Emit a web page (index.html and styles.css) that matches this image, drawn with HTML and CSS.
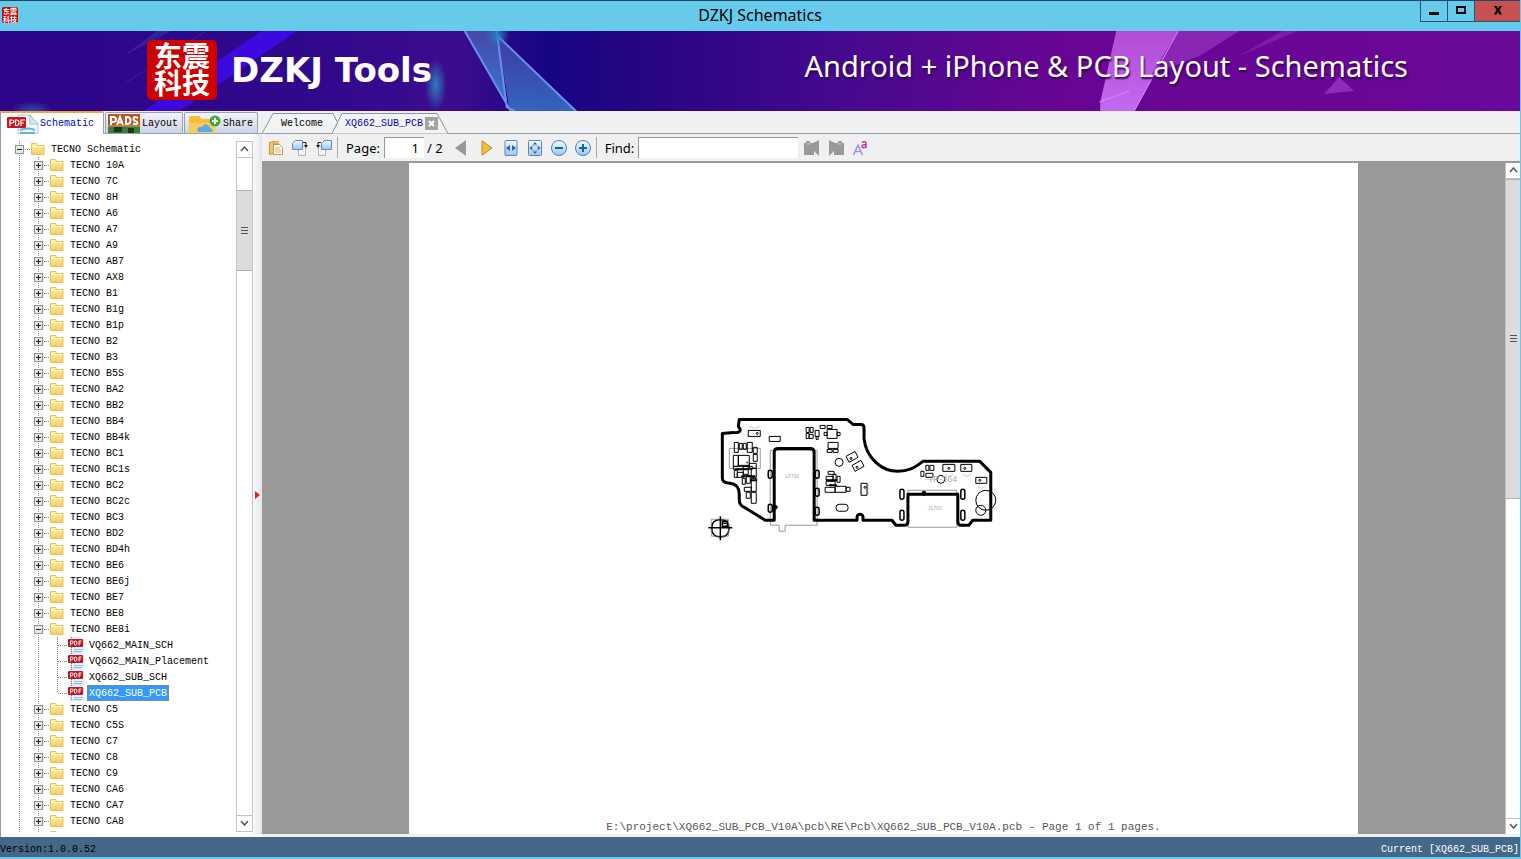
FILE: index.html
```html
<!DOCTYPE html>
<html lang="en">

<head>
    <meta charset="UTF-8">
    <meta name="viewport" content="width=device-width, initial-scale=1.0">
    <title>DZKJ Schematics</title>
    <link rel="stylesheet" href="styles.css">
</head>

<body>
    <!-- shared icons -->
    <svg class="defs" aria-hidden="true">
        <defs>
            <linearGradient id="yellow" x1="0" y1="0" x2="0" y2="1">
                <stop offset="0" stop-color="#fff3ab" />
                <stop offset="1" stop-color="#f3d05c" />
            </linearGradient>
            <linearGradient id="blue" x1="0" y1="0" x2="0" y2="1">
                <stop offset="0" stop-color="#f4faff" />
                <stop offset="1" stop-color="#9cc4ee" />
            </linearGradient>
            <symbol id="folder" viewBox="0 0 16 16">
                <path d="M1.500 2.500h5l1 2h6.500v9H1.500z" fill="url(#yellow)" stroke="#e0bf5e" />
                <path d="M2 5.500h11.500" stroke="#fff8cc" />
            </symbol>
            <symbol id="pdf" viewBox="0 0 16 16">
                <path d="M3 0h9l4 4v12H3z" fill="#eef7fd" stroke="#b4cfe0" stroke-width=".6" />
                <path d="M3.500 0v16" stroke="#777" stroke-dasharray="1 1" />
                <path d="M6 12.500h9M5 14.500h9" stroke="#7fc0ea" />
                <rect x="0" y="2" width="15" height="8" rx="1" fill="#c9151e" />
                <path d="M2.500 8.500V4H4a1 1 0 0 1 0 2.500H2.500M6.500 4v4h1q1.500 0 1.500-2T7.500 4zM11 8.500V4h2.500M11 6h2" fill="none" stroke="#fff" stroke-width=".9" />
            </symbol>
        </defs>
    </svg>

    <div class="window">
        <header class="title-bar">
            <div class="app-icon">东震<br>科技</div>
            <h1>DZKJ Schematics</h1>
            <div class="win-btns">
                <button type="button" aria-label="Minimize"><svg width="12" height="12"><path d="M1 8h10v3H1z" /></svg></button>
                <button type="button" aria-label="Maximize"><svg width="12" height="12"><path d="M2 3h8v6H2z" fill="none" stroke="#000" stroke-width="2" /></svg></button>
                <button type="button" class="close" aria-label="Close"><svg width="12" height="12"><path d="M2 2h2.500L6 4.500 7.500 2H10L7.500 6 10 10.500H7.500L6 8l-1.500 2.500H2L4.500 6z" /></svg></button>
            </div>
        </header>

        <div class="banner">
            <svg class="rays" viewBox="0 0 1521 80" preserveAspectRatio="none" aria-hidden="true">
                <defs>
                    <linearGradient id="shard" x1="0" y1="0" x2="0" y2="1">
                        <stop offset="0" stop-color="#4a58b4" stop-opacity=".8" />
                        <stop offset="1" stop-color="#3a7ccf" />
                    </linearGradient>
                    <linearGradient id="pink" x1="0" y1="0" x2="0" y2="1">
                        <stop offset="0" stop-color="#b24bd6" />
                        <stop offset="1" stop-color="#c46af0" />
                    </linearGradient>
                    <radialGradient id="spot">
                        <stop offset="0" stop-color="#2c7fc0" />
                        <stop offset="1" stop-color="#2c7fc0" stop-opacity="0" />
                    </radialGradient>
                </defs>
                <path d="M262 0h35L180 80h-36z" fill="#3c0ae0" />
                <path d="M158 0h12l-42 22zM206 0L126 52" fill="#3a3aa0" stroke="#4a3cb4" opacity=".5" />
                <ellipse cx="436" cy="54" rx="11" ry="26" fill="url(#spot)" />
                <ellipse cx="32" cy="80" rx="22" ry="10" fill="url(#spot)" opacity=".6" />
                <path d="M465 0h33l10 76z" fill="url(#shard)" />
                <path d="M498 5l80 75h-68z" fill="url(#shard)" opacity=".8" />
                <path d="M465 0l46 80M497 0l10 76 8 4M498 5l78 75" fill="none" stroke="#6b8cf0" stroke-width="2" />
                <circle cx="498" cy="4" r="12" fill="url(#spot)" />
                <path d="M1117 0h62l-44 80h-34v-9z" fill="url(#pink)" />
                <path d="M1179 0h61l-38 24-50 20z" fill="#8a25b4" />
                <path d="M1100 71l30-11M1179 0l-44 80" stroke="#d98cf5" />
                <path d="M1283 0h15l-60 26z" fill="#8a2bb8" opacity=".6" />
                <path d="M1340 46l15 14-30 3z" fill="#8c2bbd" />
            </svg>
            <div class="logo">东震<br>科技</div>
            <strong>DZKJ Tools</strong>
            <p>Android + iPhone &amp; PCB Layout - Schematics</p>
        </div>

        <div class="workspace">
            <aside>
                <nav class="side-tabs">
                    <button type="button" class="active">
                        <svg width="34" height="20" viewBox="0 0 34 20">
                            <path d="M12 1h12l8 9v10H12z" fill="#f4f9fc" stroke="#a9c6d6" />
                            <path d="M23 1l1 9h8z" fill="#d3e8f3" stroke="#8fb4c8" stroke-width=".7" />
                            <path d="M14 16q8-3 15 0M14 19h15" fill="none" stroke="#5bb5e6" stroke-width="2" />
                            <rect x="1" y="3" width="19" height="11" rx="1" fill="#c7161d" />
                            <path d="M4 12V6h2q2 0 2 1.500T6 9H4M9.500 6v5.500h1q2.500 0 2.500-2.800T10.500 6zM15 12V6h4M15 9h3" fill="none" stroke="#fff" stroke-width="1.200" />
                        </svg>Schematic
                    </button>
                    <button type="button">
                        <svg width="32" height="19" viewBox="0 0 32 19">
                            <rect width="32" height="19" fill="#bb5426" />
                            <rect y="12" width="32" height="7" fill="#3c7c36" />
                            <path d="M6 13h8v5H6zM20 14h6v5h-6z" fill="#193819" />
                            <path d="M0 12h32" stroke="#e0a060" />
                            <path d="M3 11V3h2q3 0 3 2.500T5 8H3M9 11l3-8 3 8M10 8.500h4M18 3v7h1q3.500 0 3.500-3.500T19 3zM30 4q-4.500-2-4.500 0.500 0 2 2 2.500T29.500 9q-1 2-4.500 0.500" fill="none" stroke="#fff" stroke-width="2" />
                        </svg>Layout
                    </button>
                    <button type="button">
                        <svg width="34" height="19" viewBox="0 0 34 19">
                            <path d="M2 4q0-2 2-2h8l3 3h11q2 0 2 2v12H2z" fill="#f8bd35" />
                            <path d="M2 9h26v10H2z" fill="#fbcd57" />
                            <path d="M12 18q-3-1-1-4 2-2 4-1 2-4 6-2 2 1 2 3 4 1 2 4z" fill="#5aa9e8" />
                            <circle cx="28" cy="7" r="5.500" fill="#42a83e" />
                            <path d="M28 4v6M25 7h6" stroke="#fff" stroke-width="2" />
                        </svg>Share
                    </button>
                </nav>
                <div class="tree-panel">
                    <div class="tree"></div>
                    <div class="scrollbar tree-bar">
                        <button type="button" aria-label="Scroll up"><svg width="9" height="6"><path d="M1 5l3.500-4L8 5" /></svg></button>
                        <div class="track"><div class="thumb"></div></div>
                        <button type="button" aria-label="Scroll down"><svg width="9" height="6"><path d="M1 1l3.500 4L8 1" /></svg></button>
                    </div>
                    <div class="splitter"><svg width="5" height="10"><path d="M0 1l5 4-5 4z" fill="#e02020" /></svg></div>
                </div>
            </aside>

            <main>
                <nav class="doc-tabs">
                    <button type="button" class="welcome">
                        <svg width="76" height="21"><path d="M0 20.500L11 .5h60l5 10" /></svg>
                        <span>Welcome</span>
                    </button>
                    <button type="button" class="current">
                        <svg width="116" height="21"><path d="M0 20.500L10 .5h95l11 20" /></svg>
                        <span>XQ662_SUB_PCB</span>
                        <svg class="tab-close" width="13" height="13"><path d="M0 0h13v13H0z" fill="#a3a3a3" /><path d="M4 4l5 5M9 4L4 9" stroke="#fff" stroke-width="2" /></svg>
                    </button>
                </nav>

                <div class="toolbar">
                    <button type="button" aria-label="Open">
                        <svg width="16" height="16"><path d="M1.500 2.500l4-1v12l-4 1z" fill="#f3c55c" stroke="#c9953a" /><path d="M5.500 1.500h5v2h-5z" fill="#f6d68b" stroke="#d3a452" /><path d="M5.500 4.500h6l3 3v7h-9z" fill="#fffdf5" stroke="#b89a62" /><path d="M7 8h5M7 10h6M7 12h6" stroke="#e0b766" /></svg>
                    </button>
                    <button type="button" aria-label="Rotate right">
                        <svg width="16" height="16"><path d="M6.500 6.500h7v9h-7z" fill="#f4f4f4" stroke="#b5b5b5" /><path d="M.5 3.500l3-3h7v9H.5z" fill="url(#blue)" stroke="#6288b5" /><path d="M11 2.500h3v3" fill="none" stroke="#222" /><path d="M12 5h4l-2 3z" fill="#222" /></svg>
                    </button>
                    <button type="button" aria-label="Rotate left">
                        <svg width="16" height="16"><path d="M2.500 6.500h7v9h-7z" fill="#f4f4f4" stroke="#b5b5b5" /><path d="M5.500 3.500l3-3h7v9h-10z" fill="url(#blue)" stroke="#6288b5" /><path d="M5 2.500H2v3" fill="none" stroke="#222" /><path d="M0 5h4L2 8z" fill="#222" /></svg>
                    </button>
                    <i class="sep"></i>
                    <label for="page">Page:</label>
                    <input type="text" id="page" value="1">
                    <span class="total">/ 2</span>
                    <button type="button" class="prev" aria-label="Previous page">
                        <svg width="12" height="16"><path d="M11 0v16L0 8z" fill="#999" /></svg>
                    </button>
                    <button type="button" aria-label="Next page">
                        <svg width="12" height="16"><path d="M1 .8v14.400L11 8z" fill="#f4bd36" stroke="#b98a25" /></svg>
                    </button>
                    <button type="button" aria-label="Fit width">
                        <svg width="14" height="16"><rect x="1" y=".5" width="12" height="15" rx="1" fill="url(#blue)" stroke="#5687bd" /><path d="M6 5v6L2 8zM8 5v6l4-3z" fill="#2865a8" /></svg>
                    </button>
                    <button type="button" aria-label="Fit page">
                        <svg width="14" height="16"><rect x=".5" y=".5" width="13" height="15" rx="1" fill="url(#blue)" stroke="#5687bd" /><path d="M7 2l2 2.500H5zM7 14l2-2.500H5zM1.500 8L4 6v4zM12.500 8L10 6v4z" fill="#2865a8" /><path d="M4.500 5.500h5v5h-5z" fill="none" stroke="#6d9cd0" stroke-dasharray="1 1" /></svg>
                    </button>
                    <button type="button" aria-label="Zoom out">
                        <svg width="16" height="16"><circle cx="8" cy="8" r="7.500" fill="url(#blue)" stroke="#4783b7" /><path d="M4 8h8" stroke="#14639f" stroke-width="2" /></svg>
                    </button>
                    <button type="button" aria-label="Zoom in">
                        <svg width="16" height="16"><circle cx="8" cy="8" r="7.500" fill="url(#blue)" stroke="#4783b7" /><path d="M4 8h8M8 4v8" stroke="#14639f" stroke-width="2" /></svg>
                    </button>
                    <i class="sep"></i>
                    <label for="find">Find:</label>
                    <input type="text" id="find">
                    <button type="button" aria-label="Find previous">
                        <svg width="16" height="16"><path d="M0 3h2V1h4v2h3l6-3v16l-5-5v4H0z" fill="#999" /><path d="M3 4h3" stroke="#ddd" /></svg>
                    </button>
                    <button type="button" aria-label="Find next">
                        <svg width="16" height="16"><path d="M16 3h-2V1h-4v2H7L1 0v16l5-5v4h10z" fill="#999" /><path d="M10 4h3" stroke="#ddd" /></svg>
                    </button>
                    <button type="button" aria-label="Match case">
                        <svg width="16" height="16"><path d="M1.500 15L6 5l4.500 10M3 11.500h6" fill="none" stroke="#a48cf0" stroke-width="1.500" /><path d="M10 2.500q4-2 4 1V8M14 4.500q-4 0-4 2t4 .5" fill="none" stroke="#b5389c" stroke-width="1.500" /></svg>
                    </button>
                </div>

                <div class="viewer">
                    <div class="canvas">
                        <div class="sheet">
                            <!-- sub board outline, units are px of the sheet -->
                            <svg viewBox="408 162 951 656" preserveAspectRatio="xMidYMin meet" fill="none" stroke="#000">
                                <g stroke="#999">
                                    <path d="M770 450V525H779V531H785V525H817V450zM729 448h31v20h-31zM908 490h49v37h-49z" />
                                    <path d="M748 426l6 2 6-2M861 483v11M868 483v11M925 479h14M945 474l4 2 4-2M963 474l4 2 4-2M978 486l4 2 4-2" stroke-width=".5" />
                                </g>
                                <path d="M739 419H847L853 424H861Q864 424 864 428V438C866 458 882 471 898 471C908 471 914 468 923 461H980L991 472V520H973L969 525H961Q958 525 958 521V494H908V521Q908 525 905 525H896L892 520H863V517A3 3 0 0 0 857 517V520H814V452Q814 448 810 448H778Q774 448 774 452V520H765L744 507Q739 505 739 500V494Q739 484 730 483Q722 483 722 478V433L733 432Q740 433 740 429L738 426Z" stroke-width="3" stroke-linejoin="round" />
                                <g stroke-width="1.500">
                                    <rect x="768" y="470" width="4" height="8" rx="2" />
                                    <rect x="768" y="504" width="4" height="8" rx="2" />
                                    <rect x="815" y="470" width="4" height="8" rx="2" />
                                    <rect x="815" y="488" width="4" height="8" rx="2" />
                                    <rect x="815" y="507" width="4" height="8" rx="2" />
                                    <rect x="900" y="489" width="4" height="10" rx="2" />
                                    <rect x="900" y="510" width="4" height="10" rx="2" />
                                    <rect x="961" y="489" width="4" height="10" rx="2" />
                                    <rect x="961" y="510" width="4" height="10" rx="2" />
                                    <rect x="836" y="504" width="12" height="7" rx="3" stroke-width="1" />
                                </g>
                                <g fill="#000">
                                    <circle cx="775" cy="507" r="2" />
                                    <circle cx="924" cy="493" r="2" />
                                </g>
                                <g stroke-width="1">
                                    <!-- left cluster -->
                                    <path d="M734 442h4v10h-4zM739 443h3v6h-3zM743 443h3v6h-3zM747 442h5v10h-5zM733 455h5v11h-5zM738 455h11v10h-11zM753 447h4v6h-4zM753 454h4v7h-4zM733 466h19v3h-19zM734 470h3v7h-3zM737 472h6v5h-6zM743 466h5v8h-5zM749 463h7v5h-7zM751 468h5v9h-5zM742 478h3v6h-3zM746 475h4v8h-4zM751 478h5v13h-5zM744 487h7v4h-7zM746 492h4v6h-4zM751 492h5v11h-5z" />
                                    <path d="M735 469h13M741 476h14M750 480h7" stroke-width="2" />
                                    <!-- upper parts -->
                                    <path d="M748 430h12v6h-12zM769 436h11v5h-11zM806 427h3v5h-3zM810 427h3v5h-3zM806 433h3v5h-3zM809 434h4v4h-4zM815 430h4v6h-4zM816 436h2v3h-2zM820 425h5v3h-5zM827 425h5v3h-5zM827 429h10v9h-10zM824 432h3v3h-3zM837 432h3v3h-3zM828 442h10v6h-10zM827 449h5v3h-5zM833 449h5v3h-5z" />
                                    <path d="M846 456l9-5 3 6-9 5zM852 465l9-5 3 6-9 5z" />
                                    <circle cx="839" cy="462" r="4" />
                                    <!-- centre parts -->
                                    <path d="M828 471h6v3h-6zM833 474h3v6h-3zM826 476h7v4h-7zM837 476h3v6h-3zM826 481h9v4h-9zM825 487h10v5h-10zM835 486h11v6h-11zM846 487h4v4h-4zM861 483h6v12h-6z" />
                                    <path d="M826 480h11M829 485h8" stroke-width="2" />
                                    <!-- right parts -->
                                    <path d="M926 465h3v5h-3zM930 465h4v5h-4zM921 471h3v5h-3zM926 473h7v4h-7zM943 464h12v7h-12zM961 464h11v7h-11zM976 477h11v6h-11z" />
                                    <circle cx="941" cy="479" r="4" />
                                    <circle cx="986" cy="500" r="10" />
                                    <circle cx="981" cy="510" r="5" />
                                </g>
                                <g stroke-width="1">
                                    <circle cx="757" cy="433" r="1" />
                                    <circle cx="851" cy="458" r="1" />
                                    <circle cx="857" cy="467" r="1" />
                                    <circle cx="949" cy="468" r="1" />
                                    <circle cx="965" cy="468" r="1" />
                                    <circle cx="980" cy="480" r="1" />
                                    <circle cx="865" cy="487" r="1" />
                                    <circle cx="747" cy="462" r=".5" />
                                </g>
                                <!-- origin mark -->
                                <rect x="711.500" y="519.500" width="17" height="17" rx="7" stroke-width="1.500" />
                                <path d="M711 519h17v17h-17z" stroke="#777" stroke-width=".7" />
                                <path d="M708 527.500h24M720 516v24" stroke-width="1.500" />
                                <path d="M722 521h5v5h-5zM722 523h4" stroke-width="1.500" />
                                <g class="ref">
                                    <text x="928" y="482" font-size="9">TP-364</text>
                                    <text x="785" y="478" font-size="5">LF700</text>
                                    <text x="928" y="510" font-size="5">J1703</text>
                                </g>
                            </svg>
                            <p>E:\project\XQ662_SUB_PCB_V10A\pcb\RE\Pcb\XQ662_SUB_PCB_V10A.pcb - Page 1 of 1 pages.</p>
                        </div>
                    </div>
                    <div class="scrollbar view-bar">
                        <button type="button" aria-label="Scroll up"><svg width="9" height="6"><path d="M1 5l3.500-4L8 5" /></svg></button>
                        <div class="track"><div class="thumb"></div></div>
                        <button type="button" aria-label="Scroll down"><svg width="9" height="6"><path d="M1 1l3.500 4L8 1" /></svg></button>
                    </div>
                </div>
            </main>
        </div>

        <footer>
            <span>Version:1.0.0.52</span>
            <span class="now">Current [XQ662_SUB_PCB]</span>
        </footer>
    </div>

    <script>
        var models = ['10A', '7C', '8H', 'A6', 'A7', 'A9', 'AB7', 'AX8', 'B1', 'B1g', 'B1p', 'B2', 'B3', 'B5S', 'BA2',
            'BB2', 'BB4', 'BB4k', 'BC1', 'BC1s', 'BC2', 'BC2c', 'BC3', 'BD2', 'BD4h', 'BE6', 'BE6j', 'BE7', 'BE8',
            'BE8i', 'C5', 'C5S', 'C7', 'C8', 'C9', 'CA6', 'CA7', 'CA8', ''];
        var files = ['VQ662_MAIN_SCH', 'VQ662_MAIN_Placement', 'XQ662_SUB_SCH', 'XQ662_SUB_PCB'];
        var opened = 'BE8i';
        var selected = 'XQ662_SUB_PCB';

        function row(icon, text, open) {
            var toggle = icon == 'pdf' ? '<i class="toggle-gap"></i>'
                : '<button type="button" class="toggle' + (open ? ' open' : '') + '" aria-label="Toggle"></button>';
            var cls = text == selected ? 'name selected' : 'name';
            return '<div class="row ' + icon + '">' + toggle + '<i class="dots"></i><svg width="16" height="16"><use href="#' + icon + '"/></svg>'
                + '<span class="' + cls + '">' + text + '</span></div>';
        }

        var html = '<ul><li>' + row('folder', 'TECNO Schematic', true) + '<ul>';
        models.forEach(function (m) {
            var open = m == opened;
            html += '<li>' + row('folder', m ? 'TECNO ' + m : '', open);
            if (open) {
                html += '<ul class="files">';
                files.forEach(function (f) {
                    html += '<li>' + row('pdf', f) + '</li>';
                });
                html += '</ul>';
            }
            html += '</li>';
        });
        html += '</ul></li></ul>';
        document.querySelector('.tree').innerHTML = html;
    </script>
</body>

</html>
```
FILE: styles.css
```css
* {
    padding: 0;
    margin: 0;
    box-sizing: border-box;
}

body {
    font-family: "Liberation Mono", monospace;
    font-size: 10px;
    color: #000;
}

button {
    border: 0;
    background: none;
    font: inherit;
    color: inherit;
}

svg {
    flex: none;
}

ul {
    list-style: none;
}

.defs {
    position: absolute;
    width: 0;
    height: 0;
}

.window {
    display: flex;
    flex-direction: column;
    height: 100vh;
    overflow: hidden;
    border-right: 1px solid #66cbea;
    border-bottom: 2px solid #66cbea;
    background-color: #f0f0f0;
}

/* title bar */
.title-bar {
    display: grid;
    grid-template-columns: 100px 1fr 100px;
    flex: none;
    height: 31px;
    border-top: 1px solid #1c4a66;
    background-color: #66cbea;
}

.title-bar h1 {
    font: 16px/29px "Noto Sans", sans-serif;
    text-align: center;
}

.app-icon {
    width: 16px;
    height: 16px;
    margin: 6px 2px;
    border-radius: 2px;
    background-color: #c80000;
    color: #fff;
    font: bold 7px/8px "Noto Sans CJK SC", sans-serif;
    text-align: center;
}

.win-btns {
    display: flex;
    height: 21px;
    border: 1px solid #25566c;
    border-width: 0 0 1px 1px;
}

.win-btns button {
    width: 27px;
    border-right: 1px solid #25566c;
}

.win-btns .close {
    flex: 1;
    border-right: 0;
    background-color: #c75050;
}

/* banner */
.banner {
    position: relative;
    display: flex;
    align-items: center;
    flex: none;
    height: 80px;
    padding: 0 112px 2px 147px;
    background: linear-gradient(90deg, #2d0589 0%, #30088c 20%, #3c0c8e 30%, #160582 36%, #2b0583 44%, #47098f 56%, #690594 70%, #6a0899 100%);
    color: #fff;
}

.rays {
    position: absolute;
    top: 0;
    left: 0;
    width: 100%;
    height: 100%;
}

.banner .logo,
.banner strong,
.banner p {
    position: relative;
}

.logo {
    width: 70px;
    height: 60px;
    padding: 2px 0;
    border-radius: 5px;
    background-color: #cf0000;
    font: bold 28px/27px "Noto Sans CJK SC", sans-serif;
    text-align: center;
}

.banner strong {
    margin-left: 14px;
    font: bold 34px/40px "DejaVu Sans", sans-serif;
}

.banner p {
    margin: 0 0 8px auto;
    font: 29px/36px "Noto Sans", sans-serif;
    text-shadow: 1px 2px 2px #2a0050;
}

.workspace {
    display: flex;
    flex: 1;
    min-height: 0;
}

/* left side */
aside {
    display: flex;
    flex-direction: column;
    flex: none;
    width: 262px;
    border-left: 1px solid #8d9fae;
}

.side-tabs {
    display: flex;
    align-items: flex-end;
    gap: 1px;
    flex: none;
    height: 23px;
    border-bottom: 1px solid #93a5b5;
}

.side-tabs button {
    display: flex;
    align-items: center;
    gap: 2px;
    height: 21px;
    padding: 0 4px 0 2px;
    border: 1px solid #93a5b5;
    border-bottom: 0;
    border-radius: 2px 2px 0 0;
    background: linear-gradient(#f4f4f8, #cfd2e4);
}

.side-tabs .active {
    height: 23px;
    margin-bottom: -1px;
    padding: 0 9px 0 5px;
    gap: 0;
    border-top: 2px solid #f2a33a;
    border-left: 0;
    background: #fff;
    color: #0000d0;
}

.tree-panel {
    display: flex;
    flex: 1;
    min-height: 0;
    padding-bottom: 3px;
    background-color: #fff;
}

.tree {
    flex: 1;
    margin: 7px 0 2px;
    overflow: hidden;
}

.tree ul {
    padding-left: 14px;
    background: repeating-linear-gradient(#888 0 1px, transparent 1px 2px) no-repeat 18px 0;
    background-size: 1px 100%;
}

.tree ul ul {
    padding-left: 19px;
    background-position: 23px 0;
}

.tree ul .files {
    background-size: 1px calc(100% - 8px);
}

.row {
    display: flex;
    align-items: center;
    height: 16px;
    white-space: nowrap;
}

.toggle {
    width: 9px;
    height: 9px;
    border: 1px solid #919191;
    background: linear-gradient(#222, #222) no-repeat center / 5px 1px, linear-gradient(#222, #222) no-repeat center / 1px 5px, #e8e8e8;
}

.toggle.open {
    background: linear-gradient(#222, #222) no-repeat center / 5px 1px, #e8e8e8;
}

.toggle-gap {
    width: 4px;
}

.dots {
    width: 6px;
    height: 1px;
    background: repeating-linear-gradient(90deg, transparent 0 1px, #888 1px 2px);
}

.pdf .dots {
    width: 11px;
}

.name {
    height: 16px;
    margin-left: 3px;
    padding: 0 1px;
    border: 1px solid transparent;
    line-height: 16px;
}

.selected {
    border: 1px dotted #c47a10;
    background-color: #3399ff;
    color: #fff;
}

.splitter {
    display: flex;
    align-items: center;
    width: 9px;
    padding: 22px 2px 0;
    background: linear-gradient(90deg, #fafafa, #e3e5ea);
}

/* scrollbars */
.scrollbar {
    display: flex;
    flex-direction: column;
    flex: none;
    background-color: #fff;
    border: 1px solid #c3c3c3;
}

.scrollbar button {
    flex: none;
    height: 16px;
    border-bottom: 1px solid #c3c3c3;
}

.scrollbar button:last-child {
    border-top: 1px solid #c3c3c3;
    border-bottom: 0;
}

.scrollbar path {
    fill: none;
    stroke: #555;
    stroke-width: 1.5;
}

.track {
    flex: 1;
}

.thumb {
    border: 1px solid #b0b0b0;
    border-width: 1px 0;
    background: repeating-linear-gradient(#555 0 1px, transparent 1px 3px) no-repeat center / 7px 7px, #dcdcdc;
}

.tree-bar {
    width: 17px;
    margin: 7px 0 2px;
}

.tree-bar .thumb {
    height: 81px;
    margin-top: 32px;
}

.view-bar {
    width: 15px;
    border-width: 0 0 0 1px;
}

.view-bar .thumb {
    height: 50%;
}

/* document side */
main {
    display: flex;
    flex-direction: column;
    flex: 1;
    min-width: 0;
    padding-bottom: 3px;
}

.doc-tabs {
    display: flex;
    align-items: flex-end;
    flex: none;
    height: 23px;
    background: linear-gradient(#8aa0b2, #8aa0b2) no-repeat bottom / 100% 1px;
}

.doc-tabs button {
    position: relative;
    display: flex;
    align-items: center;
    height: 21px;
}

.doc-tabs button > svg:first-child {
    position: absolute;
    left: 0;
    top: 0;
    fill: #f3f3f3;
    stroke: #7f97aa;
}

.doc-tabs span,
.tab-close {
    position: relative;
}

.welcome {
    width: 76px;
    padding-left: 19px;
}

.current {
    width: 116px;
    margin-left: -6px;
    padding-left: 13px;
    gap: 2px;
    color: #0000d0;
}

.toolbar {
    display: flex;
    align-items: center;
    flex: none;
    height: 29px;
    padding: 0 2px;
    border-bottom: 2px solid #999;
    font: 13px/20px "Noto Sans", sans-serif;
}

.toolbar button {
    display: flex;
    align-items: center;
    justify-content: center;
    width: 24px;
    height: 24px;
}

.toolbar input {
    height: 21px;
    border: 1px solid #999;
    border-width: 1px 0 0 1px;
    background-color: #fff;
    font: inherit;
}

#page {
    width: 40px;
    margin: 0 3px 0 4px;
    padding-right: 5px;
    text-align: right;
}

#find {
    width: 160px;
    margin: 0 2px 0 4px;
}

.sep {
    width: 1px;
    height: 21px;
    margin: 0 8px 0 1px;
    background-color: #aaa;
}

.toolbar .prev {
    margin: 0 2px 0 6px;
}

.viewer {
    display: flex;
    flex: 1;
    min-height: 0;
}

.canvas {
    display: flex;
    justify-content: center;
    flex: 1;
    overflow: hidden;
    background-color: #999;
}

.sheet {
    display: flex;
    flex-direction: column;
    height: 100%;
    aspect-ratio: 297 / 210;
    background-color: #fff;
}

.sheet svg {
    flex: 1;
    min-height: 0;
    width: 100%;
}

.sheet p {
    flex: none;
    height: 15px;
    font-size: 11px;
    line-height: 16px;
    color: #555;
    text-align: center;
}

.ref {
    fill: #aaa;
    stroke: none;
    font-family: "Liberation Sans", sans-serif;
}

/* status bar */
footer {
    display: flex;
    justify-content: space-between;
    flex: none;
    height: 20px;
    padding: 2px 1px 0 0;
    background-color: #456789;
    line-height: 22px;
}

.now {
    color: #fff;
}
```
